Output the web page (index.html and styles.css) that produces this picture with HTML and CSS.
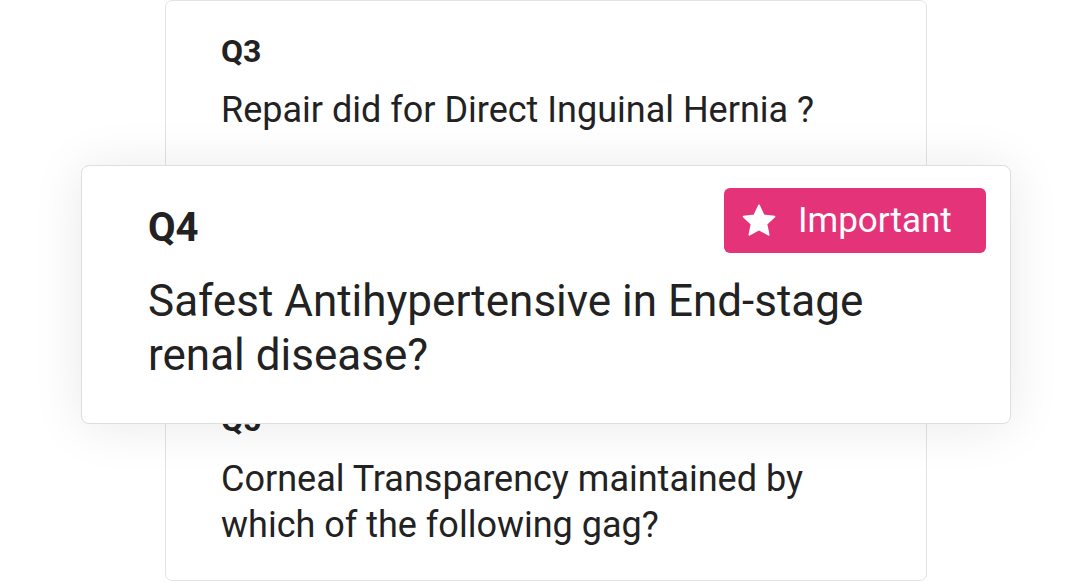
FILE: index.html
```html
<!DOCTYPE html>
<html lang="en">
<head>
<meta charset="utf-8">
<title>Questions</title>
<link rel="stylesheet" href="styles.css">
</head>
<body>
<main class="stack">
  <article class="card card-back card-top">
    <h3 class="q-label">Q3</h3>
    <p class="q-text">Repair did for Direct Inguinal Hernia ?</p>
  </article>
  <article class="card card-front">
    <div class="front-head">
      <h3 class="q-label-lg">Q4</h3>
      <span class="badge">
        <svg class="star" viewBox="0 0 24 24" width="36" height="35" aria-hidden="true">
          <path d="M12 1.6l3.2 6.9 7.4.8-5.5 5.1 1.5 7.4L12 18.1l-6.6 3.7 1.5-7.4L1.4 9.3l7.4-.8z" fill="#fff" stroke="#fff" stroke-width="1.2" stroke-linejoin="round"/>
        </svg>
        <span class="badge-text">Important</span>
      </span>
    </div>
    <p class="q-text-lg">Safest Antihypertensive in End-stage<br>renal disease?</p>
  </article>
  <article class="card card-back card-bottom">
    <h3 class="q-label">Q5</h3>
    <p class="q-text">Corneal Transparency maintained by<br>which of the following gag?</p>
  </article>
</main>
</body>
</html>
```

FILE: styles.css
```css
html, body {
  margin: 0;
  padding: 0;
  background: #ffffff;
}
body {
  width: 1092px;
  height: 582px;
  overflow: hidden;
  font-family: Roboto, "Liberation Sans", Arial, sans-serif;
  color: #222222;
}
.stack {
  display: flex;
  flex-direction: column;
  align-items: center;
}
.card {
  box-sizing: border-box;
  background: #ffffff;
  border: 1px solid #e3e3e3;
}
.card-back {
  width: 762px;
  border-radius: 7px;
  padding: 0 20px 0 55px;
}
.card-top {
  height: 200px;
  padding-top: 30px;
}
.card-bottom {
  margin-top: -55px;
  padding-top: 30px;
  padding-bottom: 32px;
}
.q-label {
  margin: 0;
  font-size: 32px;
  line-height: 40px;
  font-weight: 700;
}
.q-text {
  margin: 16px 0 0;
  font-size: 36px;
  line-height: 46px;
  font-weight: 400;
}
.card-front {
  position: relative;
  z-index: 2;
  width: 930px;
  height: 259px;
  margin-top: -35px;
  border-color: #dedede;
  border-radius: 8px;
  padding: 22px 24px 0 66px;
  box-shadow: 0 2px 52px rgba(0, 0, 0, 0.09);
}
.front-head {
  display: flex;
  justify-content: space-between;
  align-items: flex-end;
}
.q-label-lg {
  margin: 0;
  font-size: 40px;
  line-height: 50px;
  font-weight: 700;
}
.badge {
  box-sizing: border-box;
  display: flex;
  align-items: center;
  width: 262px;
  height: 65px;
  padding-left: 17px;
  background: #e5337a;
  border-radius: 6px;
  color: #ffffff;
}
.star {
  display: block;
  flex: none;
}
.badge-text {
  margin-left: 21px;
  font-size: 35px;
  line-height: 40px;
  font-weight: 400;
  padding-top: 1px;
}
.q-text-lg {
  margin: 21px 0 0;
  font-size: 44px;
  line-height: 54px;
  font-weight: 400;
}
```
